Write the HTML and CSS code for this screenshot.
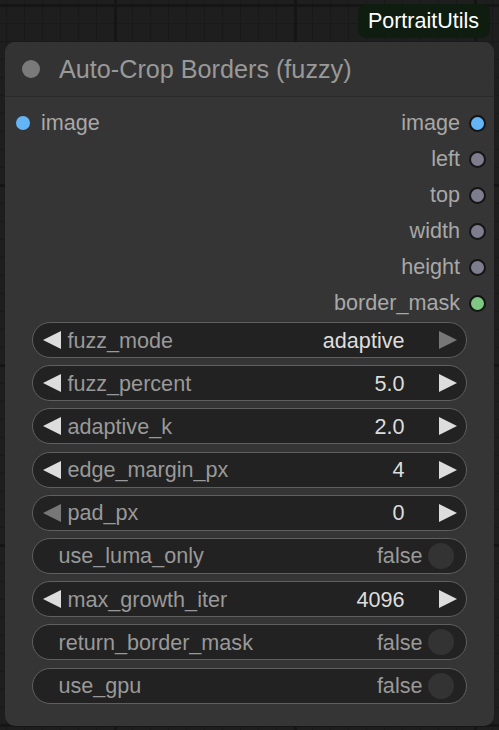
FILE: index.html
```html
<!DOCTYPE html>
<html>
<head>
<meta charset="utf-8">
<link rel="stylesheet" href="styles.css">
</head>
<body>
<div class="canvas">
  <div class="badge-row"><span class="badge">PortraitUtils</span></div>
  <div class="node">
    <div class="title">
      <span class="title-dot"></span>
      <span class="title-text">Auto-Crop Borders (fuzzy)</span>
    </div>
    <div class="slots">
      <div class="inputs">
        <div class="slot in"><span class="dot dot-image"></span><span>image</span></div>
      </div>
      <div class="outputs">
        <div class="slot out"><span>image</span><span class="dot ring dot-image"></span></div>
        <div class="slot out"><span>left</span><span class="dot ring dot-int"></span></div>
        <div class="slot out"><span>top</span><span class="dot ring dot-int"></span></div>
        <div class="slot out"><span>width</span><span class="dot ring dot-int"></span></div>
        <div class="slot out"><span>height</span><span class="dot ring dot-int"></span></div>
        <div class="slot out"><span>border_mask</span><span class="dot ring dot-mask"></span></div>
      </div>
    </div>
    <div class="widgets">
      <div class="widget num">
        <svg class="arrow" viewBox="0 0 18 18"><polygon points="18,0 0,9 18,18" fill="#ddd"/></svg>
        <span class="label">fuzz_mode</span><span class="value">adaptive</span>
        <svg class="arrow right" viewBox="0 0 18 18"><polygon points="0,0 18,9 0,18" fill="#777"/></svg>
      </div>
      <div class="widget num">
        <svg class="arrow" viewBox="0 0 18 18"><polygon points="18,0 0,9 18,18" fill="#ddd"/></svg>
        <span class="label">fuzz_percent</span><span class="value">5.0</span>
        <svg class="arrow right" viewBox="0 0 18 18"><polygon points="0,0 18,9 0,18" fill="#ddd"/></svg>
      </div>
      <div class="widget num">
        <svg class="arrow" viewBox="0 0 18 18"><polygon points="18,0 0,9 18,18" fill="#ddd"/></svg>
        <span class="label">adaptive_k</span><span class="value">2.0</span>
        <svg class="arrow right" viewBox="0 0 18 18"><polygon points="0,0 18,9 0,18" fill="#ddd"/></svg>
      </div>
      <div class="widget num">
        <svg class="arrow" viewBox="0 0 18 18"><polygon points="18,0 0,9 18,18" fill="#ddd"/></svg>
        <span class="label">edge_margin_px</span><span class="value">4</span>
        <svg class="arrow right" viewBox="0 0 18 18"><polygon points="0,0 18,9 0,18" fill="#ddd"/></svg>
      </div>
      <div class="widget num">
        <svg class="arrow" viewBox="0 0 18 18"><polygon points="18,0 0,9 18,18" fill="#777"/></svg>
        <span class="label">pad_px</span><span class="value">0</span>
        <svg class="arrow right" viewBox="0 0 18 18"><polygon points="0,0 18,9 0,18" fill="#ddd"/></svg>
      </div>
      <div class="widget toggle">
        <span class="label">use_luma_only</span><span class="state">false</span><span class="knob"></span>
      </div>
      <div class="widget num">
        <svg class="arrow" viewBox="0 0 18 18"><polygon points="18,0 0,9 18,18" fill="#ddd"/></svg>
        <span class="label">max_growth_iter</span><span class="value">4096</span>
        <svg class="arrow right" viewBox="0 0 18 18"><polygon points="0,0 18,9 0,18" fill="#ddd"/></svg>
      </div>
      <div class="widget toggle">
        <span class="label">return_border_mask</span><span class="state">false</span><span class="knob"></span>
      </div>
      <div class="widget toggle">
        <span class="label">use_gpu</span><span class="state">false</span><span class="knob"></span>
      </div>
    </div>
  </div>
</div>
</body>
</html>
```

FILE: styles.css
```css
html, body {
  margin: 0;
  padding: 0;
}
body {
  width: 499px;
  height: 730px;
  overflow: hidden;
  font-family: "Liberation Sans", Arial, sans-serif;
  background-color: #1e1e1e;
  background-image:
    linear-gradient(90deg, #151515 3px, transparent 3px),
    linear-gradient(#151515 3px, transparent 3px),
    linear-gradient(90deg, #191919 1px, transparent 1px),
    linear-gradient(#191919 1px, transparent 1px);
  background-size: 180px 180px, 180px 180px, 18px 18px, 18px 18px;
  background-position: 114px 4px, 114px 4px, 6px 5px, 6px 5px;
}
.canvas {
  padding: 4px 5px 0 5px;
}
.badge-row {
  display: flex;
  justify-content: flex-end;
  padding-right: 4px;
  margin-bottom: 4px;
}
.badge {
  display: flex;
  align-items: center;
  height: 34px;
  padding: 0 11px 0 10px;
  background: #0f1d10;
  color: #fff;
  font-size: 21.5px;
  border-radius: 8px;
}
.node {
  width: 489px;
  height: 684px;
  box-sizing: border-box;
  background: #353535;
  border-radius: 10px;
  padding-bottom: 21px;
}
.title {
  height: 55px;
  box-sizing: border-box;
  border-bottom: 1px solid #2a2a2a;
  display: flex;
  align-items: center;
  padding-left: 17px;
  background: #333;
  border-radius: 10px 10px 0 0;
}
.title-dot {
  width: 18px;
  height: 18px;
  border-radius: 50%;
  background: #7a7a7a;
  margin-right: 19px;
}
.title-text {
  color: #999;
  font-size: 25.2px;
  margin-top: 1px;
}
.slots {
  display: flex;
  justify-content: space-between;
  padding: 8px 8px 0 11px;
  height: 224px;
  box-sizing: border-box;
}
.slot {
  height: 36px;
  display: flex;
  align-items: center;
  color: #a8a8a8;
  font-size: 21.6px;
}
.slot.out {
  justify-content: flex-end;
}
.dot {
  width: 14px;
  height: 14px;
  border-radius: 50%;
  box-sizing: border-box;
}
.slot.in .dot {
  margin-right: 11px;
}
.slot.out .dot {
  margin-left: 9px;
  width: 17px;
  height: 17px;
}
.ring {
  border: 2px solid #151515;
}
.dot-image { background: #64b5f6; }
.dot-int { background: #7d7d8e; }
.dot-mask { background: #81c784; }
.widgets {
  display: flex;
  flex-direction: column;
  gap: 7.2px;
  padding: 0 27px;
  margin-top: 1px;
}
.widget {
  height: 36px;
  box-sizing: border-box;
  border: 1.5px solid #5f5f5f;
  border-radius: 18px;
  background: #222;
  display: flex;
  align-items: center;
  font-size: 21.6px;
}
.widget.num {
  padding: 0 9.5px;
}
.arrow {
  width: 18px;
  height: 18px;
  flex: none;
}
.arrow.right {
  margin-left: 34px;
}
.label {
  color: #999;
  flex: 1;
  margin-left: 7px;
  padding-top: 1px;
}
.value {
  color: #ddd;
  padding-top: 1px;
}
.widget.toggle {
  padding: 0 12.5px 0 0;
}
.widget.toggle .label {
  margin-left: 25.5px;
}
.state {
  color: #999;
  margin-right: 5px;
  padding-top: 1px;
}
.knob {
  width: 26px;
  height: 26px;
  border-radius: 50%;
  background: #333;
}
```
